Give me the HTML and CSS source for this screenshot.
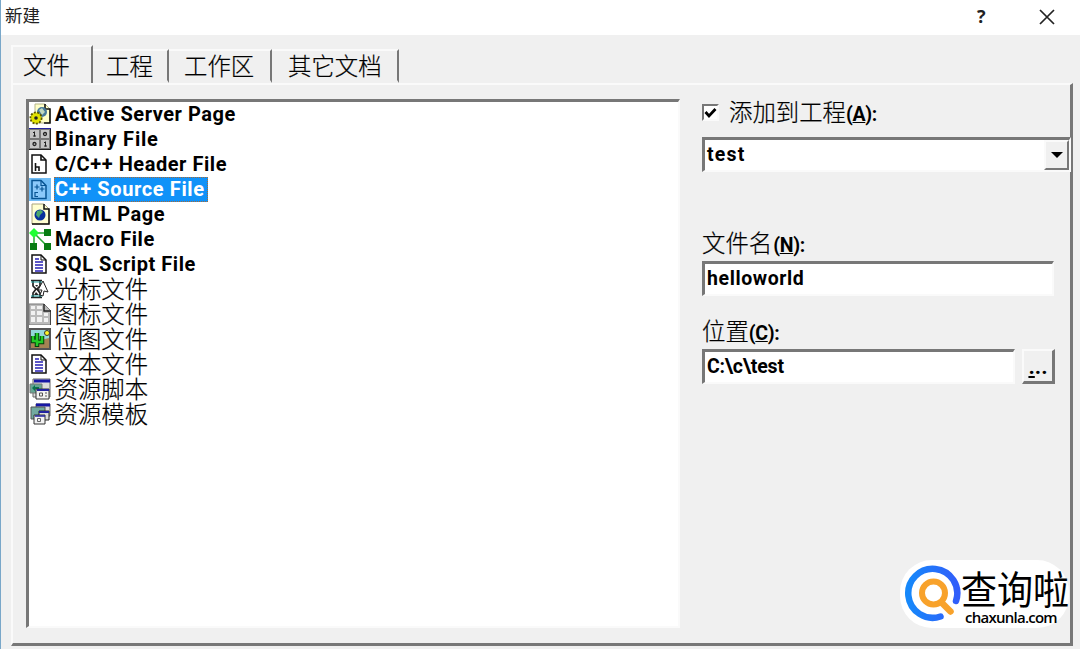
FILE: index.html
```html
<!DOCTYPE html>
<html lang="zh-CN">
<head>
<meta charset="utf-8">
<title>新建</title>
<link rel="stylesheet" href="styles.css">
</head>
<body>
<main class="window">
  <header class="titlebar">
    <span class="title">新建</span>
    <span class="help">?</span>
    <svg class="close" width="16" height="16" viewBox="0 0 16 16"><path d="M1 1L15 15M15 1L1 15" stroke="#222" stroke-width="1.7"/></svg>
  </header>
  <nav class="tabs">
    <div class="tab tab-active">文件</div>
    <div class="tab tab-project">工程</div>
    <div class="tab tab-workspace">工作区</div>
    <div class="tab tab-other">其它文档</div>
  </nav>
  <section class="panel">
    <ul class="list">
      <li class="row"><svg class="icon" viewBox="0 0 22 22"><path d="M6 1h10l5 5v14H6z" fill="#ffffc8" stroke="#b5b58a"/><path d="M16 1v5h5v14h-6" fill="none" stroke="#111" stroke-width="1.6"/><circle cx="13" cy="9" r="5" fill="#487b9b"/><path d="M10 7l3-2 3 4-3 3z" fill="#c0d8be"/><circle cx="7" cy="15" r="5.5" fill="#e2e200" stroke="#5d5900" stroke-width="2" stroke-dasharray="2 1.3"/><circle cx="7" cy="15" r="4.5" fill="#e2e200"/><circle cx="7" cy="15" r="1.800" fill="#222"/></svg><span class="latin w-asp">Active Server Page</span></li>
      <li class="row"><svg class="icon" viewBox="0 0 22 22"><path d="M0 0h22v22H0z" fill="#777"/><path d="M1 2h9v8H1zM12 2h8v8h-8zM1 12h9v8H1zM12 12h8v8h-8z" fill="#c5c5c5"/><path d="M0 .5h22" stroke="#2424a0"/><path d="M21.500 1v21M0 21.500h22" stroke="#222"/><path d="M5.500 3.500v5M4 4.500h2M4 8h3M16.500 13.500v5M15 14.500h2M15 18h3" stroke="#222" fill="none"/><circle cx="16" cy="6" r="1.500" fill="none" stroke="#222" stroke-width="1.300"/><circle cx="5.500" cy="16" r="1.500" fill="none" stroke="#222" stroke-width="1.300"/></svg><span class="latin w-bin">Binary File</span></li>
      <li class="row"><svg class="icon" viewBox="0 0 22 22"><path d="M3 2h9l5 5v13H3z" fill="#fff" stroke="#111" stroke-width="1.5"/><path d="M12 2v5h5M6.500 10v8M6.500 14H10v4" fill="none" stroke="#111" stroke-width="1.600"/></svg><span class="latin w-head">C/C++ Header File</span></li>
      <li class="row"><svg class="icon icon-selected" viewBox="0 0 22 22"><path d="M3 2h9l5 5v13H3z" fill="#8bc9fa" stroke="#075493" stroke-width="1.5"/><path d="M12 2v5h5M8 6v5M5.500 8.500h5M13 8v5M10.500 10.500h5M9 14H6v4h3" fill="none" stroke="#075493" stroke-width="1.2"/></svg><span class="latin w-src selected">C++ Source File</span></li>
      <li class="row"><svg class="icon" viewBox="0 0 22 22"><path d="M3 1h12l5 5v15H3z" fill="#ffffd0" stroke="#aaa47c"/><path d="M15 1v5h5v15H3" fill="none" stroke="#111" stroke-width="1.5"/><circle cx="11" cy="12" r="5.500" fill="#08309d"/><path d="M8 8l4-1 2 2-3 3-1 3-3-3z" fill="#4ca76c"/></svg><span class="latin w-html">HTML Page</span></li>
      <li class="row"><svg class="icon" viewBox="0 0 22 22"><path d="M5 5h12M5 6v12M5 5l13 13" stroke="#27aa35" stroke-width="1.5"/><path d="M5 0l5 5-5 5-5-5z" fill="#20ff35"/><path d="M15 1h7v7h-7zM1 15h7v7H1zM15 15h7v7h-7z" fill="#087c13"/></svg><span class="latin w-macro">Macro File</span></li>
      <li class="row"><svg class="icon" viewBox="0 0 22 22"><path d="M3 2h9l5 5v13H3z" fill="#fff" stroke="#111" stroke-width="1.5"/><path d="M12 2v5h5" fill="none" stroke="#111"/><path d="M6 6h4M6 9h8M6 12h8M6 15h8M6 18h8" stroke="#2721b5" stroke-width="1.7"/></svg><span class="latin w-sql">SQL Script File</span></li>
      <li class="row"><svg class="icon" viewBox="0 0 22 22"><path d="M2 2.500h11M2 19.500h11M4 3v5l3 3-3 4v4M11 3v5l-3 3 3 4v4" fill="none" stroke="#222" stroke-width="1.700"/><path d="M2 4h11M2 18h11" stroke="#1a9999" stroke-width="1.2"/><path d="M6 7h3l-1 2zM7 14l3 3H5z" fill="#222"/><path d="M14 3l-5 9h4l-2 5 3 1 1-5 4 1z" fill="#fff" stroke="#222"/></svg><span class="cjk">光标文件</span></li>
      <li class="row"><svg class="icon" viewBox="0 0 22 22"><path d="M0 1h15l7 7v14H0z" fill="#bbb" stroke="#777"/><path d="M2 3h4v3H2zm6 0h5v3H8zM2 8h4v4H2zm6 0h5v4H8zm7 2h4v3h-4zM2 14h4v5H2zm6 0h5v5H8zm7 1h4v4h-4z" fill="#f2f2f2"/><path d="M15 1v7h7v14" fill="none" stroke="#222" stroke-width="1.4"/></svg><span class="cjk">图标文件</span></li>
      <li class="row"><svg class="icon" viewBox="0 0 22 22"><path d="M1 1h20v20H1z" fill="#95d7db" stroke="#555" stroke-width="2"/><path d="M2 12l5-2 5 2 8-2v10H2z" fill="#a58354"/><circle cx="18" cy="5" r="2.500" fill="#fff326" stroke="#333"/><path d="M8 19V5M8 13H4V8M8 14h5V8" fill="none" stroke="#063e0c" stroke-width="4.5"/><path d="M8 18V5M8 13H4V8M8 14h5V8" fill="none" stroke="#23ca27" stroke-width="2.500"/></svg><span class="cjk">位图文件</span></li>
      <li class="row"><svg class="icon" viewBox="0 0 22 22"><path d="M3 2h9l5 5v13H3z" fill="#fff" stroke="#111" stroke-width="1.5"/><path d="M12 2v5h5" fill="none" stroke="#111"/><path d="M6 6h4M6 9h8M6 12h8M6 15h8M6 18h8" stroke="#2721b5" stroke-width="1.7"/></svg><span class="cjk">文本文件</span></li>
      <li class="row"><svg class="icon" viewBox="0 0 22 22"><path d="M4 1h17v18H4z" fill="#ddd" stroke="#666"/><path d="M5 3h16" stroke="#1717a5" stroke-width="3"/><path d="M1 6h12v9H1z" fill="#66a694" stroke="#777"/><path d="M3 10l3-3v2h4v2H6v2z" fill="#08724f"/><path d="M7 11h13v10H7z" fill="#f2f2f2" stroke="#333"/><path d="M8 12h12" stroke="#2222a0" stroke-width="2"/><path d="M10.500 15h3v3h-3zM16 15h2M16 18h2" fill="none" stroke="#555"/></svg><span class="cjk">资源脚本</span></li>
      <li class="row"><svg class="icon" viewBox="0 0 22 22"><path d="M7 1h14v12H7z" fill="#ddd" stroke="#666"/><path d="M7 2h14" stroke="#1717a5" stroke-width="3"/><path d="M2 4h14v12H2z" fill="#72aaa0" stroke="#555"/><path d="M10 8h10v9H10z" fill="#ddd" stroke="#222"/><path d="M10 9h10" stroke="#2222a0" stroke-width="2"/><path d="M5 12h11v9H5z" fill="#f2f2f2" stroke="#333"/><path d="M6 13h10" stroke="#2222a0" stroke-width="1.500"/><path d="M8.500 15.500h3v3h-3z" fill="none" stroke="#666"/></svg><span class="cjk">资源模板</span></li>
    </ul>
    <form class="fields">
      <div class="check-line"><span class="checkbox"><svg width="13" height="12" viewBox="0 0 13 12"><path d="M1.500 5l3.500 4L11.500 2" fill="none" stroke="#000" stroke-width="2.800"/></svg></span><span class="label">添加到工程<span class="key">(<u>A</u>):</span></span></div>
      <div class="box combo"><span class="value v-test">test</span><span class="drop"><svg width="12" height="7"><path d="M0 0h12L6 6z"/></svg></span></div>
      <div class="label label-name">文件名<span class="key key-name">(<u>N</u>):</span></div>
      <div class="box name"><span class="value v-name">helloworld</span></div>
      <div class="label label-place">位置<span class="key">(<u>C</u>):</span></div>
      <div class="place-line"><div class="box place"><span class="value v-place">C:\c\test</span></div><span class="browse"><u>.</u>..</span></div>
    </form>
  </section>
  <aside class="brand">
    <svg class="brand-mark" width="57" height="58" viewBox="0 0 57 58"><defs><linearGradient id="ring" x2="1"><stop stop-color="#1688fa"/><stop offset="1" stop-color="#315efa"/></linearGradient></defs><path d="M36.500 51.500A24.500 24.500 0 1 1 52 36" fill="none" stroke="url(#ring)" stroke-width="6.500" stroke-linecap="round"/><circle cx="29.500" cy="28" r="11.500" fill="none" stroke="#f8a22b" stroke-width="6"/><path d="M38 38l8.500 8.500" stroke="#f8a22b" stroke-width="6.500" stroke-linecap="round"/></svg>
    <div class="brand-copy"><div class="brand-name">查询啦</div><div class="brand-url">chaxunla.com</div></div>
  </aside>
</main>
</body>
</html>
```

FILE: styles.css
```css
* { box-sizing: border-box; }
body { margin: 0; background: #f0f0f0; color: #000; font-family: Roboto, "Noto Sans CJK SC", sans-serif; overflow: hidden; }
.window { position: relative; width: 1080px; height: 649px; display: flex; flex-direction: column; border-left: 1px solid #79a7c9; }
.titlebar { height: 35px; display: flex; align-items: center; background: #fff; padding: 0 25px 4px 4px; }
.title { font: 17.5px/22px "Noto Sans CJK SC", sans-serif; flex: 1; color: #222; padding-bottom: 2px; }
.help { font: 700 18px/22px "Open Sans", sans-serif; width: 62px; color: #222; }
.close { margin-top: 2px; }
.tabs { height: 48px; padding: 10px 0 0 10px; display: flex; align-items: flex-end; }
.tab { height: 34px; border-top: 2px solid #fafafa; border-right: 2px solid #777; font: 300 23.4px/28px "Noto Sans CJK SC", sans-serif; -webkit-text-stroke: .2px #000; padding-left: 15px; border-bottom: 3px solid #f0f0f0; }
.tab-active { width: 82px; height: 38px; border-left: 2px solid #fafafa; padding-left: 10px; line-height: 35px; border-bottom: 0; }
.tab-project { width: 76px; padding-left: 13px; }
.tab-workspace { width: 103px; }
.tab-other { width: 127px; padding-left: 16px; }
.panel { width: 1062px; height: 563px; margin-left: 10px; border: solid; border-width: 2px 3px 3px 2px; border-color: #fafafa #777 #777 #fafafa; padding: 14px 0 0 13px; display: flex; align-items: flex-start; }
.list { width: 654px; height: 529px; list-style: none; margin: 0; padding: 0; border: solid; border-width: 3px 2px 2px 3px; border-color: #777 #fafafa #fafafa #777; background: #fff; }
.row { height: 25px; display: flex; align-items: flex-start; }
.icon { width: 22px; height: 22px; flex: none; margin: 1px 3px 0 0; }
.icon-selected { background: #72bdf5; height: 23px; }
.latin { height: 25px; font: 700 20px/25px Roboto, sans-serif; padding: 0 1px; white-space: nowrap; }
.cjk { font: 300 23.4px/23.4px "Noto Sans CJK SC", sans-serif; -webkit-text-stroke: .2px #000; padding-left: .5px; }
.w-asp { letter-spacing: .54px; }
.w-bin { letter-spacing: .8px; }
.w-head, .w-html, .w-macro { letter-spacing: .55px; }
.w-sql { letter-spacing: .55px; }
.w-src { letter-spacing: .62px; }
.selected { color: #fff; background: #1092f8; outline: 1px dotted #a66a38; outline-offset: -1px; padding-right: 3px; }
.fields { width: 368px; margin-left: 22px; }
.check-line { height: 27px; display: flex; align-items: center; }
.checkbox { width: 17px; height: 17px; display: flex; align-items: center; justify-content: center; background: #fff; border: 2px solid; border-color: #777 #fafafa #fafafa #777; margin-right: 10px; }
.label { font: 300 23.4px/24px "Noto Sans CJK SC", sans-serif; -webkit-text-stroke: .2px #000; white-space: nowrap; }
.key { font: 700 19.5px/24px Roboto, sans-serif; -webkit-text-stroke: 0; letter-spacing: -.3px; }
.key-name { padding-left: 1px; }
.box { height: 35px; background: #fff; border: solid; border-width: 3px 2px 2px 3px; border-color: #777 #fafafa #fafafa #777; display: flex; align-items: center; }
.value { font: 700 19.5px/28px Roboto, sans-serif; padding-left: 2px; }
.v-test { letter-spacing: 1.2px; }
.v-name { letter-spacing: .6px; }
.v-place { letter-spacing: -.2px; }
.combo { width: 369px; margin-top: 11px; justify-content: space-between; }
.drop { width: 25px; height: 30px; display: flex; justify-content: center; align-items: center; background: #f0f0f0; border: 2px solid; border-color: #fafafa #777 #777 #fafafa; }
.label-name { margin-top: 58px; height: 26px; }
.name { width: 352px; margin-top: 5px; }
.label-place { margin-top: 22px; height: 26px; }
.place-line { margin-top: 5px; display: flex; gap: 7px; }
.place { width: 313px; }
.browse { width: 33px; height: 35px; font: 700 22px/32px Roboto, sans-serif; text-align: center; border: solid; border-width: 2px 3px 3px 2px; border-color: #fafafa #777 #777 #fafafa; }
.brand { position: absolute; left: 899px; top: 560px; width: 169px; height: 68px; display: flex; background: #fff; border-radius: 32px; padding: 5px 0 0 4px; }
.brand-mark { flex: none; }
.brand-copy { width: 108px; }
.brand-name { font: 400 36px/38px "Noto Sans CJK SC", sans-serif; height: 43px; padding-top: 3px; white-space: nowrap; transform: scaleY(1.06); }
.brand-url { font: 600 15px/18px "Open Sans", sans-serif; letter-spacing: -.75px; padding-left: 4px; }
```
